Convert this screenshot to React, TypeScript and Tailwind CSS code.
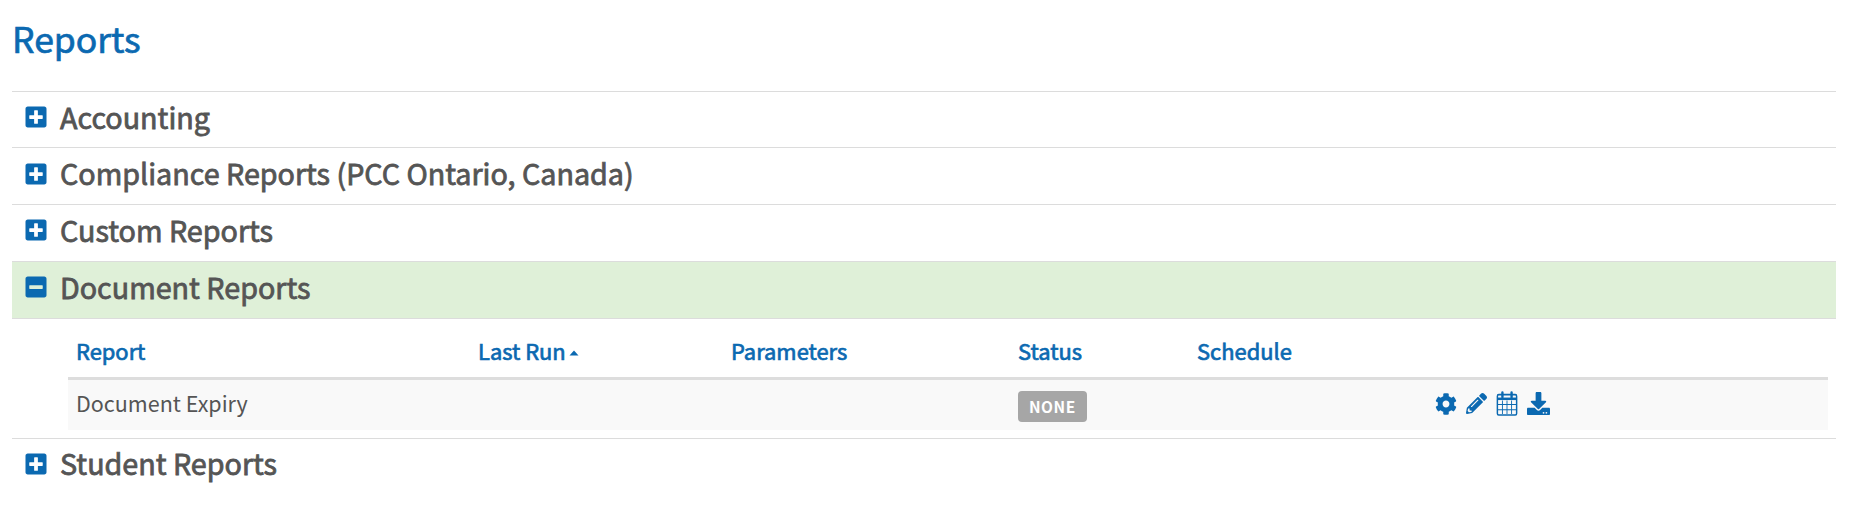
import { FaPlusSquare, FaMinusSquare, FaCog, FaPencilAlt, FaDownload } from 'react-icons/fa';

const sections = ['Accounting', 'Compliance Reports (PCC Ontario, Canada)', 'Custom Reports'];
const columns = ['Report', 'Last Run', 'Parameters', 'Status', 'Schedule', ''];

function CalendarIcon() {
  return (
    <svg viewBox="0 0 24 24" className="w-[22px] h-[25px]" fill="none" stroke="currentColor" preserveAspectRatio="none">
      <rect x="1.500" y="3.500" width="21" height="19.500" rx="1.500" strokeWidth="1.600" />
      <path d="M2 7.500h20" strokeWidth="2.400" />
      <path d="M2 13h20M2 18h20M7 9v13M12 9v13M17 9v13" strokeWidth="1" />
      <path d="M7 1.500v4.500M17 1.500v4.500" strokeWidth="2.600" strokeLinecap="round" />
    </svg>
  );
}

function SectionRow({ title, open }: { title: string; open?: boolean }) {
  const Icon = open ? FaMinusSquare : FaPlusSquare;
  return (
    <div className={`flex items-center h-[56.67px] border-t border-[#dcdcdc] pl-[12px] ${open ? 'bg-[#dff0d8] border-b h-[58px]' : ''}`}>
      <Icon className="w-[24px] h-[24px] text-[#0b69b1] mr-[12px] -mt-[5px]" />
      <span className="text-[28.7px] leading-[40px] -mt-[6px] text-[#555555] [-webkit-text-stroke:0.8px_#555555]">{title}</span>
    </div>
  );
}

export default function App() {
  return (
    <div className="min-h-screen bg-white pl-3 pr-[18px] font-['Noto_Sans_CJK_SC','Noto_Sans',sans-serif]">
      <h1 className="text-[35.5px] leading-[40px] text-[#0b69b1] [-webkit-text-stroke:0.7px_#0b69b1] pt-[18px] pb-[32.7px]">Reports</h1>

      {sections.map((s) => (
        <SectionRow key={s} title={s} />
      ))}
      <SectionRow title="Document Reports" open />

      <div className="pl-[56px] pr-[8px] pb-[8px]">
        <table className="w-full table-fixed border-collapse">
          <colgroup>
            <col className="w-[402px]" />
            <col className="w-[253px]" />
            <col className="w-[287px]" />
            <col className="w-[179px]" />
            <col className="w-[238px]" />
            <col />
          </colgroup>
          <thead>
            <tr className="border-b-[3px] border-[#dddddd] h-[60px]">
              {columns.map((c) => (
                <th key={c} className="text-left px-[8px] pt-[7px] text-[21.9px] font-normal text-[#0b69b1] [-webkit-text-stroke:0.7px_#0b69b1]">
                  {c}
                  {c === 'Last Run' && (
                    <svg viewBox="0 0 10 6" className="inline w-[10px] h-[6px] ml-[3px] mb-[2px]" fill="currentColor">
                      <path d="M5 0.500 L9.500 5.500 H0.500 Z" />
                    </svg>
                  )}
                </th>
              ))}
            </tr>
          </thead>
          <tbody>
            <tr className="h-[51px] bg-[#f9f9f9]">
              <td className="px-[8px] pb-[4px] text-[21.5px] text-[#555555]">Document Expiry</td>
              <td />
              <td />
              <td className="px-[8px]">
                <span className="inline-block mt-[3px] bg-[#a6a6a6] text-white text-[15.5px] leading-[23px] font-bold tracking-[0.5px] px-[11px] py-[4px] rounded-[4px]">NONE</span>
              </td>
              <td />
              <td className="px-[8px]">
                <div className="flex items-center gap-[9px] text-[#0b69b1] -mt-[2px]">
                  <FaCog className="w-[22px] h-[22px]" />
                  <FaPencilAlt className="w-[21px] h-[21px]" />
                  <CalendarIcon />
                  <FaDownload className="w-[23px] h-[23px]" />
                </div>
              </td>
            </tr>
          </tbody>
        </table>
      </div>

      <SectionRow title="Student Reports" />
    </div>
  );
}
